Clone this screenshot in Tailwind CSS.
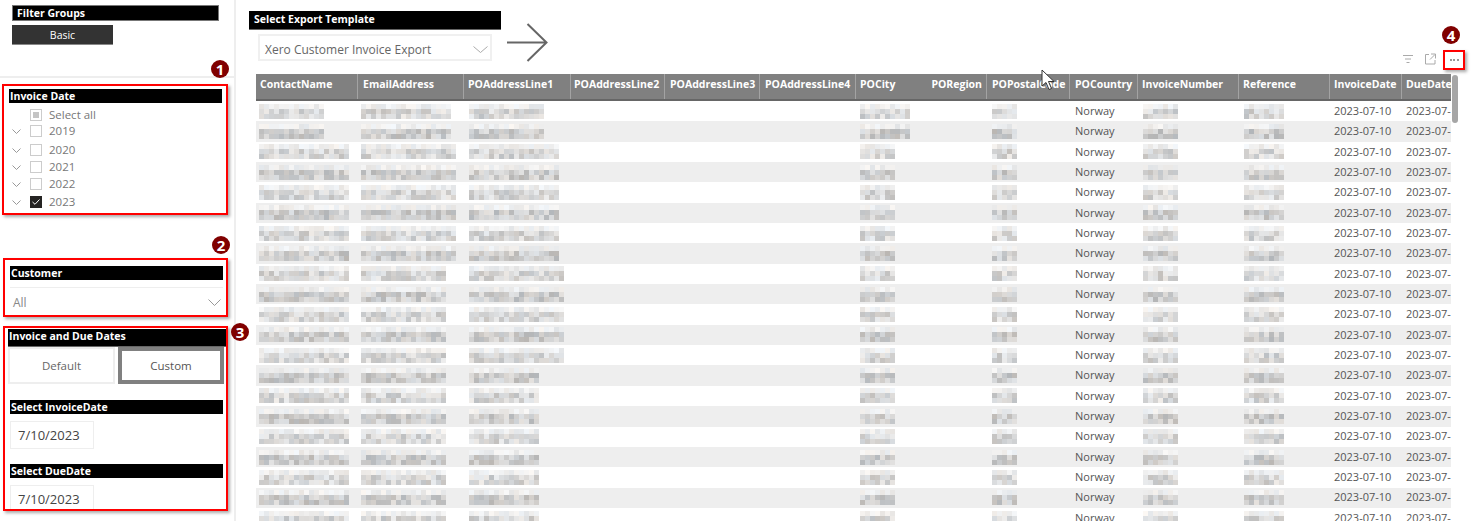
<!DOCTYPE html>
<html lang="en">
<head>
<meta charset="UTF-8">
<title>Export</title>
<script src="https://cdn.jsdelivr.net/npm/@tailwindcss/browser@4"></script>
</head>
<body class="bg-white overflow-hidden">
<div class="relative flex w-[1473px] h-[521px] overflow-hidden font-['Open_Sans',sans-serif] text-[#666]">

  <!-- left filter pane -->
  <aside class="w-[236px] h-full shrink-0 border-r-2 border-[#eee] flex flex-col">
    <div class="h-[78px] shrink-0 border-b-2 border-[#eee] pt-[5px] pl-[12px]">
      <div class="w-[207px] h-[16px] bg-black border border-[#777] text-white text-[10.5px] font-bold leading-[15px] pl-[4px]">Filter Groups</div>
      <div class="mt-[4px] w-[101px] h-[20px] bg-[#333] border-b border-[#888] text-white text-[10.5px] leading-[21px] text-center">Basic</div>
    </div>

    <!-- invoice date -->
    <section class="ml-[2px] mt-[6px] w-[226px] h-[131px] shrink-0 border-2 border-[#f00] shadow-[2px_2px_3px_#aaa] pt-[3px] pl-[5px]">
      <div class="w-[213px] h-[14px] bg-black text-white text-[10.5px] font-bold leading-[14px] pl-[1px]">Invoice Date</div>
      <ul class="text-[11.5px] text-[#777]">
        <li class="flex items-center h-[16px] mt-[4px] pl-[21px]">
          <span class="w-[12px] h-[12px] border border-[#ccc] flex items-center justify-center"><span class="w-[6px] h-[6px] bg-[#c4c4c4]"></span></span>
          <span class="ml-[7px]">Select all</span>
        </li>
        <li class="flex items-center h-[16px]">
          <svg class="w-[9px] h-[5px] ml-[3px]" viewBox="0 0 9 5" fill="none" stroke="#999"><path d="M.5.5 4.5 4.5 8.5.5"/></svg>
          <span class="ml-[9px] w-[12px] h-[12px] border border-[#ccc]"></span>
          <span class="ml-[7px]">2019</span>
        </li>
        <li class="flex items-center h-[16px] mt-[3px]">
          <svg class="w-[9px] h-[5px] ml-[3px]" viewBox="0 0 9 5" fill="none" stroke="#999"><path d="M.5.5 4.5 4.5 8.5.5"/></svg>
          <span class="ml-[9px] w-[12px] h-[12px] border border-[#ccc]"></span>
          <span class="ml-[7px]">2020</span>
        </li>
        <li class="flex items-center h-[16px] mt-[1px]">
          <svg class="w-[9px] h-[5px] ml-[3px]" viewBox="0 0 9 5" fill="none" stroke="#999"><path d="M.5.5 4.5 4.5 8.5.5"/></svg>
          <span class="ml-[9px] w-[12px] h-[12px] border border-[#ccc]"></span>
          <span class="ml-[7px]">2021</span>
        </li>
        <li class="flex items-center h-[16px] mt-[1px]">
          <svg class="w-[9px] h-[5px] ml-[3px]" viewBox="0 0 9 5" fill="none" stroke="#999"><path d="M.5.5 4.5 4.5 8.5.5"/></svg>
          <span class="ml-[9px] w-[12px] h-[12px] border border-[#ccc]"></span>
          <span class="ml-[7px]">2022</span>
        </li>
        <li class="flex items-center h-[16px] mt-[2px]">
          <svg class="w-[9px] h-[5px] ml-[3px]" viewBox="0 0 9 5" fill="none" stroke="#999"><path d="M.5.5 4.5 4.5 8.5.5"/></svg>
          <span class="ml-[9px] w-[12px] h-[12px] bg-[#252423] flex items-center justify-center">
            <svg class="w-[8px] h-[6px]" viewBox="0 0 8 6" fill="none" stroke="#fff"><path d="M.5 3 3 5.300 7.500.5"/></svg>
          </span>
          <span class="ml-[7px]">2023</span>
        </li>
      </ul>
    </section>

    <!-- customer -->
    <section class="ml-[3px] mt-[43px] w-[225px] h-[59px] shrink-0 border-2 border-[#f00] shadow-[2px_2px_3px_#aaa] pt-[6px] pl-[5px] overflow-hidden">
      <div class="w-[213px] h-[14px] bg-black text-white text-[10.5px] font-bold leading-[15px] pl-[1px]">Customer</div>
      <div class="mt-[7px] w-[213px] h-[30px] border-t border-[#eee] flex items-center justify-between pl-[3px] pr-[2px] text-[12px] text-[#888]">
        <span>All</span>
        <svg class="w-[13px] h-[7px]" viewBox="0 0 13 7" fill="none" stroke="#999"><path d="M.5.5 6.500 6.500 12.500.5"/></svg>
      </div>
    </section>

    <!-- invoice and due dates -->
    <section class="ml-[3px] mt-[9px] w-[225px] h-[185px] shrink-0 border-2 border-[#f00] shadow-[2px_2px_3px_#aaa] pl-[3px] pt-[1px] overflow-hidden">
      <div class="w-[218px] h-[18px] bg-black border-b border-[#666] text-white text-[10.5px] font-bold leading-[15px] pl-[1px]">Invoice and Due Dates</div>
      <div class="flex gap-[3px]">
        <div class="w-[107px] h-[37px] border-2 border-[#eee] flex items-center justify-center text-[11.5px] text-[#666]">Default</div>
        <div class="w-[106px] h-[37px] border-4 border-[#808080] flex items-center justify-center text-[11.5px] text-[#555]">Custom</div>
      </div>
      <div class="mt-[16px] ml-[2px] w-[213px] h-[14px] bg-black text-white text-[10.5px] font-bold leading-[14px] pl-[1px]">Select InvoiceDate</div>
      <div class="mt-[7px] ml-[2px] w-[84px] h-[28px] border border-[#eee] pl-[7px] text-[13px] leading-[27px] text-[#444]">7/10/2023</div>
      <div class="mt-[15px] ml-[2px] w-[213px] h-[14px] bg-black text-white text-[10.5px] font-bold leading-[14px] pl-[1px]">Select DueDate</div>
      <div class="mt-[7px] ml-[2px] w-[84px] h-[28px] border border-[#eee] pl-[7px] text-[13px] leading-[27px] text-[#444]">7/10/2023</div>
    </section>
  </aside>

  <!-- main area -->
  <main class="flex-1 min-w-0">
    <div class="h-[74px] flex pl-[13px] pt-[11px]">
      <div>
        <div class="w-[252px] h-[19px] bg-black border-b border-[#666] text-white text-[10.5px] font-bold leading-[16px] pl-[5px]">Select Export Template</div>
        <div class="ml-[9px] mt-[4px] w-[234px] h-[27px] border-2 border-[#f0f0f0] flex items-center justify-between pl-[5px] pr-[2px] pt-[4px] text-[12px] text-[#666]">
          <span>Xero Customer Invoice Export</span>
          <svg class="w-[15px] h-[7px]" viewBox="0 0 15 7" fill="none" stroke="#aaa"><path d="M.5.5 7.500 6.500 14.500.5"/></svg>
        </div>
      </div>
      <svg class="ml-[6px] mt-[12px] w-[41px] h-[39px]" viewBox="0 0 41 39" fill="none" stroke="#666" stroke-width="2"><path d="M0 19.500H39M20.500 1 39.500 19.500 20.500 38"/></svg>
    </div>

    <!-- table -->
    <div class="ml-[20px] w-[1195px] h-[447px] overflow-hidden">
      <div class="grid grid-cols-[102px_106px_107px_94px_95px_96px_131px_83px_68px_101px_91px_72px_50px] h-[27px] bg-[#808080] border-b-2 border-[#666] text-white text-[10.5px] font-bold leading-[21px]">
        <div class="pl-[4px] whitespace-nowrap overflow-hidden border-r border-[#a3a3a3]">ContactName</div>
        <div class="pl-[5px] whitespace-nowrap overflow-hidden border-r border-[#a3a3a3]">EmailAddress</div>
        <div class="pl-[4px] whitespace-nowrap overflow-hidden border-r border-[#a3a3a3]">POAddressLine1</div>
        <div class="pl-[3px] whitespace-nowrap overflow-hidden border-r border-[#a3a3a3]">POAddressLine2</div>
        <div class="pl-[5px] whitespace-nowrap overflow-hidden border-r border-[#a3a3a3]">POAddressLine3</div>
        <div class="pl-[5px] whitespace-nowrap overflow-hidden border-r border-[#a3a3a3]">POAddressLine4</div>
        <div class="pl-[4px] pr-[4px] flex justify-between whitespace-nowrap overflow-hidden border-r border-[#a3a3a3]"><span>POCity</span><span>PORegion</span></div>
        <div class="pl-[5px] whitespace-nowrap overflow-hidden border-r border-[#a3a3a3]">POPostalCode</div>
        <div class="pl-[5px] whitespace-nowrap overflow-hidden border-r border-[#a3a3a3]">POCountry</div>
        <div class="pl-[4px] whitespace-nowrap overflow-hidden border-r border-[#a3a3a3]">InvoiceNumber</div>
        <div class="pl-[4px] whitespace-nowrap overflow-hidden border-r border-[#a3a3a3]">Reference</div>
        <div class="pl-[4px] whitespace-nowrap overflow-hidden border-r border-[#a3a3a3]">InvoiceDate</div>
        <div class="pl-[4px] whitespace-nowrap overflow-hidden">DueDate</div>
      </div>
      <div id="rows"></div>
    </div>
  </main>

  <!-- visual header icons -->
  <div class="absolute left-[1401px] top-[53px] flex items-center gap-[10px]">
    <svg class="w-[13px] h-[12px]" viewBox="0 0 13 12" fill="none" stroke="#aaa"><path d="M2 2.500H12M4 6H10M5.500 9.500H8.500"/></svg>
    <svg class="w-[12px] h-[12px]" viewBox="0 0 12 12" fill="none" stroke="#aaa"><path d="M5 1.500H1.500V11H11V7M7 1H11.500V5.500M11 1.500 6 6.500"/></svg>
  </div>
  <div class="absolute left-[1443px] top-[50px] w-[22px] h-[20px] border-2 border-[#f00] shadow-[2px_2px_3px_#aaa] flex items-center justify-center gap-[1.500px]">
    <span class="w-[2px] h-[2px] bg-[#999]"></span><span class="w-[2px] h-[2px] bg-[#999]"></span><span class="w-[2px] h-[2px] bg-[#999]"></span>
  </div>

  <!-- scrollbar -->
  <div class="absolute left-[1452px] top-[75px] w-[6px] h-[48px] rounded-[3px] bg-[#a6a6a6]"></div>

  <!-- numbered callouts -->
  <div class="absolute left-[211px] top-[60px] w-[18px] h-[18px] rounded-full bg-[#800000] text-white text-[15px] font-bold leading-[18px] text-center">1</div>
  <div class="absolute left-[212px] top-[236px] w-[18px] h-[18px] rounded-full bg-[#800000] text-white text-[15px] font-bold leading-[18px] text-center">2</div>
  <div class="absolute left-[231px] top-[323px] w-[18px] h-[18px] rounded-full bg-[#800000] text-white text-[15px] font-bold leading-[18px] text-center">3</div>
  <div class="absolute left-[1442px] top-[26px] w-[18px] h-[18px] rounded-full bg-[#800000] text-white text-[15px] font-bold leading-[18px] text-center">4</div>

  <!-- mouse pointer -->
  <svg class="absolute left-[1041px] top-[69px] w-[15px] h-[22px]" viewBox="0 0 15 22"><path d="M1 1V17L5 13.500 8 20.500 10.500 19.500 7.500 12.500H13Z" fill="#fff" stroke="#333"/></svg>
</div>

<script>
// blurred customer data, drawn as small mosaics
let seed = 7;
function rnd() {
  seed = (seed * 16807) % 2147483647;
  return seed / 2147483647;
}

function mosaic(width, dark) {
  const cols = Math.round(width / 5);
  let rects = '';
  for (let y = 0; y < 3; y++) {
    for (let x = 0; x < cols; x++) {
      // top row is only the pale edge of the blur
      const base = y === 0 ? 228 : (dark ? 182 : 192);
      const span = y === 0 ? 20 : 45;
      const g = Math.round(base + rnd() * span);
      const tint = Math.round(rnd() * 8) - 4;
      rects += `<rect x="${x * 5}" y="${y * 5}" width="5" height="5" fill="rgb(${g + tint},${g},${g - tint})"/>`;
    }
  }
  return `<svg width="${cols * 5}" height="15" class="block">${rects}</svg>`;
}

const groups = [
  {rows: 2, cells: [65, 90, 75, 52]},
  {rows: 6, cells: [90, 95, 90, 35]},
  {rows: 5, cells: [90, 85, 95, 35]},
  {rows: 8, cells: [90, 85, 70, 35]}
];

const out = [];
let n = 0;
groups.forEach(group => {
  for (let i = 0; i < group.rows; i++) {
    const grey = n % 2 === 1;
    const c = group.cells;
    out.push(`
      <div class="grid grid-cols-[102px_106px_107px_94px_95px_96px_131px_83px_68px_101px_91px_72px_50px] items-center h-[20.35px] text-[11px] text-[#555] whitespace-nowrap ${grey ? 'bg-[#eeeeee]' : 'bg-white'}">
        <div class="pl-[3px]">${mosaic(c[0], grey)}</div>
        <div class="pl-[3px]">${mosaic(c[1], grey)}</div>
        <div class="pl-[5px]">${mosaic(c[2], grey)}</div>
        <div></div><div></div><div></div>
        <div class="pl-[4px]">${mosaic(c[3], grey)}</div>
        <div class="pl-[5px]">${mosaic(25, grey)}</div>
        <div class="pl-[5px]">Norway</div>
        <div class="pl-[5px]">${mosaic(35, grey)}</div>
        <div class="pl-[5px]">${mosaic(40, grey)}</div>
        <div class="pl-[4px]">2023-07-10</div>
        <div class="pl-[4px] overflow-hidden">2023-07-10</div>
      </div>`);
    n++;
  }
});
document.getElementById('rows').innerHTML = out.join('');
</script>
</body>
</html>
